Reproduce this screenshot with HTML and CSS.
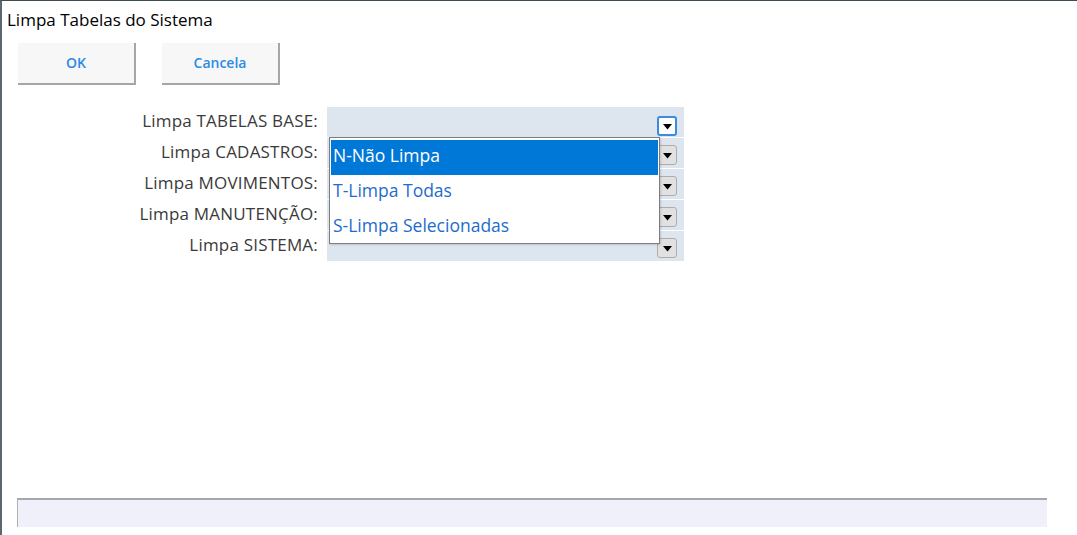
FILE: index.html
```html
<!DOCTYPE html>
<html lang="pt">

<head>
  <meta charset="UTF-8">
  <title>Limpa Tabelas do Sistema</title>
  <link rel="stylesheet" href="styles.css">
</head>

<body>
  <div class="window">
    <div class="title">Limpa Tabelas do Sistema</div>

    <div class="toolbar">
      <button class="btn">OK</button>
      <button class="btn">Cancela</button>
    </div>

    <div class="form">
      <label>Limpa TABELAS BASE:</label>
      <div class="combo first">
        <span class="arrow focus"><svg width="9" height="6" viewBox="0 0 9 6"><polygon points="0,0 9,0 4.5,5.5" fill="#000"/></svg></span>
        <!-- open list -->
        <div class="list">
          <div class="item selected">N-Não Limpa</div>
          <div class="item">T-Limpa Todas</div>
          <div class="item">S-Limpa Selecionadas</div>
        </div>
      </div>

      <label>Limpa CADASTROS:</label>
      <div class="combo">
        <span class="arrow"><svg width="9" height="6" viewBox="0 0 9 6"><polygon points="0,0 9,0 4.5,5.5" fill="#000"/></svg></span>
      </div>

      <label>Limpa MOVIMENTOS:</label>
      <div class="combo">
        <span class="arrow"><svg width="9" height="6" viewBox="0 0 9 6"><polygon points="0,0 9,0 4.5,5.5" fill="#000"/></svg></span>
      </div>

      <label>Limpa MANUTENÇÃO:</label>
      <div class="combo">
        <span class="arrow"><svg width="9" height="6" viewBox="0 0 9 6"><polygon points="0,0 9,0 4.5,5.5" fill="#000"/></svg></span>
      </div>

      <label>Limpa SISTEMA:</label>
      <div class="combo">
        <span class="arrow"><svg width="9" height="6" viewBox="0 0 9 6"><polygon points="0,0 9,0 4.5,5.5" fill="#000"/></svg></span>
      </div>
    </div>

    <div class="spacer"></div>

    <div class="status"></div>
  </div>
</body>

</html>
```

FILE: styles.css
```css
html,
body {
  margin: 0;
  height: 100%;
}

body {
  background-color: #ffffff;
  font-family: "Open Sans", "Noto Sans", sans-serif;
}

.window {
  height: 535px;
  box-sizing: border-box;
  border-top: 1px solid #3d4b52;
  border-left: 2px solid #5b6870;
  display: flex;
  flex-direction: column;
}

.title {
  font-size: 17px;
  color: #000;
  padding: 7px 0 0 5px;
  height: 33px;
  box-sizing: border-box;
}

.toolbar {
  display: flex;
  gap: 26px;
  padding-left: 16px;
  margin-top: 9px;
}

.btn {
  width: 118px;
  height: 42px;
  background-color: #f7f7f7;
  border: none;
  border-right: 2px solid #a6a6a6;
  border-bottom: 2px solid #a6a6a6;
  color: #2a8be6;
  font-family: "Open Sans", sans-serif;
  font-size: 14px;
  font-weight: 600;
  padding: 0 0 2px 0;
}

.form {
  display: grid;
  grid-template-columns: 308px 357px;
  grid-auto-rows: 30px;
  row-gap: 1px;
  column-gap: 9px;
  margin-top: 22px;
  margin-left: 8px;
}

.form label {
  text-align: right;
  color: #3a3a3a;
  font-size: 17px;
  letter-spacing: 0.2px;
  line-height: 27px;
  white-space: nowrap;
}

.combo {
  background-color: #dde5ef;
  display: flex;
  justify-content: flex-end;
  align-items: flex-end;
  padding: 0 7px 3px 0;
  position: relative;
}

.arrow {
  width: 20px;
  height: 20px;
  box-sizing: border-box;
  background-color: #e1e1e1;
  border: 1px solid #adadad;
  border-radius: 3px;
  display: flex;
  align-items: center;
  justify-content: center;
  padding-top: 1px;
}

.arrow.focus {
  background-color: #ffffff;
  border: 2px solid #3c8cdc;
}

.combo.first {
  padding-bottom: 1px;
}

.list {
  position: absolute;
  left: 2px;
  top: 30px;
  width: 331px;
  height: 107px;
  box-sizing: border-box;
  background-color: #ffffff;
  border: 1px solid #7d7d7d;
  padding: 2px 1px;
  z-index: 10;
  box-shadow: 1px 1px 2px rgba(0, 0, 0, 0.15);
}

.item {
  height: 35px;
  line-height: 31px;
  padding-left: 2px;
  font-size: 17.5px;
  color: #1e6ccd;
  white-space: nowrap;
}

.item.selected {
  background-color: #0078d7;
  color: #ffffff;
}

.spacer {
  flex-grow: 1;
}

.status {
  margin: 0 30px 8px 15px;
  height: 27px;
  background-color: #eff0fa;
  border-top: 2px solid #a4a8ad;
  border-left: 1px solid #b0b0b0;
}
```
